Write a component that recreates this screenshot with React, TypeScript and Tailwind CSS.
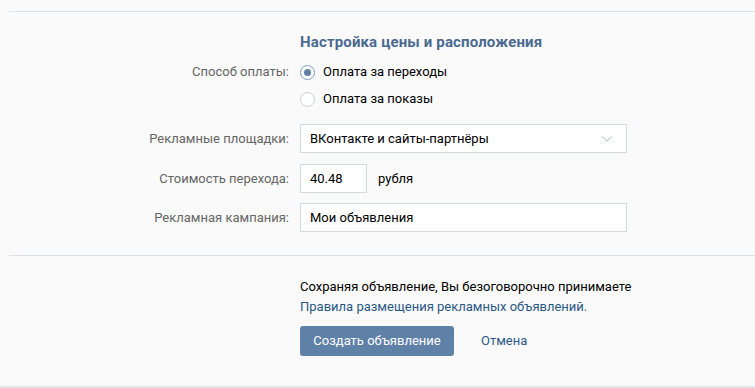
import { ChevronDown } from 'lucide-react';

const font = { fontFamily: 'Roboto, "Open Sans", Arial, sans-serif' };

function Row({ label, children, className = '' }: { label: string; children: React.ReactNode; className?: string }) {
  return (
    <div className={`flex items-center ${className}`}>
      <div className="w-[280px] pr-0 text-right text-[13px] text-[#656565]">{label}</div>
      <div className="ml-[11px] flex items-center">{children}</div>
    </div>
  );
}

function Radio({ checked, label }: { checked?: boolean; label: string }) {
  return (
    <label className="flex items-center gap-[8px] text-[13px] text-black">
      <span
        className={`flex h-[15px] w-[15px] items-center justify-center rounded-full border bg-white ${
          checked ? 'border-[#7d9dc2]' : 'border-[#c5d0db]'
        }`}
      >
        {checked && <span className="h-[7px] w-[7px] rounded-full bg-[#5f81a8]" />}
      </span>
      {label}
    </label>
  );
}

export default function App() {
  return (
    <div className="h-[388px] w-[755px] overflow-hidden bg-[#fafafa]" style={font}>
      <div className="ml-[9px] mt-[11px] border-t border-[#dce1e6]" />

      <div className="pl-[9px]">
        <div className="ml-[291px] mt-[21px] text-[15px] font-bold leading-[18px] tracking-[0.15px] text-[#4a6a90]">
          Настройка цены и расположения
        </div>

        <Row label="Способ оплаты:" className="mt-[13px] h-[16px]">
          <Radio checked label="Оплата за переходы" />
        </Row>
        <Row label="" className="mt-[11px] h-[16px]">
          <Radio label="Оплата за показы" />
        </Row>

        <Row label="Рекламные площадки:" className="mt-[17px]">
          <div className="flex h-[29px] w-[327px] items-center justify-between border border-[#d3d9de] bg-white pl-[9px] pr-[10px] text-[13px] text-black">
            ВКонтакте и сайты-партнёры
            <ChevronDown className="h-[18px] w-[18px] text-[#a8b1bb]" strokeWidth={1.3} />
          </div>
        </Row>

        <Row label="Стоимость перехода:" className="mt-[11px]">
          <div className="flex h-[29px] w-[67px] items-center border border-[#d3d9de] bg-white pl-[9px] text-[13px] text-black">
            40.48
          </div>
          <span className="ml-[11px] text-[13px] text-black">рубля</span>
        </Row>

        <Row label="Рекламная кампания:" className="mt-[10px]">
          <div className="flex h-[29px] w-[327px] items-center border border-[#d3d9de] bg-white pl-[9px] text-[13px] text-black">
            Мои объявления
          </div>
        </Row>

        <div className="mt-[23px] border-t border-[#dce1e6]" />

        <div className="ml-[291px] mt-[21px] text-[13px] leading-[20px]">
          <p className="text-black">Сохраняя объявление, Вы безоговорочно принимаете</p>
          <p className="text-[#2a5885]">Правила размещения рекламных объявлений.</p>
          <div className="mt-[9px] flex items-center">
            <button className="h-[30px] w-[154px] rounded-[3px] bg-[#5f81a8] text-[13px] text-white">
              Создать объявление
            </button>
            <span className="ml-[27px] text-[13px] text-[#2a5885]">Отмена</span>
          </div>
        </div>
      </div>

      <div className="mt-[30px] border-t-2 border-[#e3e4e8]" />
    </div>
  );
}
